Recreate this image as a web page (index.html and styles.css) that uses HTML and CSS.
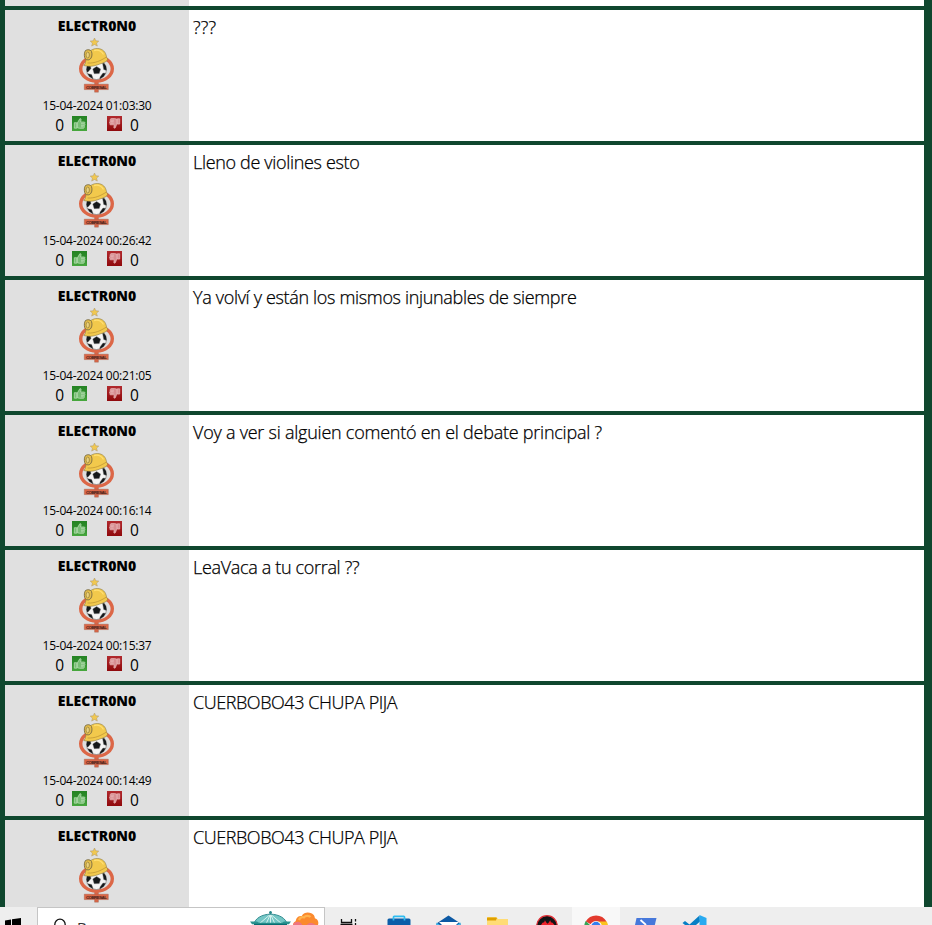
FILE: index.html
```html
<!DOCTYPE html>
<html lang="es">
<head>
<meta charset="utf-8">
<title>Comentarios</title>
<link rel="stylesheet" href="styles.css">
</head>
<body>
<svg class="defs" aria-hidden="true">
  <defs>
    <linearGradient id="g-green" x1="0" y1="0" x2="0" y2="1"><stop offset="0" stop-color="#258323"/><stop offset=".5" stop-color="#2f8f2d"/><stop offset="1" stop-color="#48a83e"/></linearGradient>
    <linearGradient id="g-red" x1="0" y1="0" x2="0" y2="1"><stop offset="0" stop-color="#b12a2e"/><stop offset="1" stop-color="#8f090c"/></linearGradient>
    <clipPath id="ball-clip"><circle cx="26.5" cy="35.500" r="10"/></clipPath>
    <symbol id="crest" viewBox="0 0 52 64">
      <path d="M24.5 4l1.3 2.8 3 .3-2.2 2 .7 3-2.8-1.6-2.8 1.6.7-3-2.2-2 3-.3z" fill="#f1c850" stroke="#a8956a" stroke-width=".5"/>
      <path d="M24.6 46h3.8v12.2h-3.8z" fill="#dc6747" stroke="#96604f" stroke-width=".4"/>
      <ellipse cx="26.5" cy="34.8" rx="15.8" ry="12.3" fill="#dedede" stroke="#dc6747" stroke-width="3.4"/>
      <circle cx="26.5" cy="35.500" r="10" fill="#f4f4f4" stroke="#555" stroke-width=".5"/>
      <g clip-path="url(#ball-clip)" fill="#15181a" stroke="#777" stroke-width=".4">
        <path d="M22.800 35l3.800-2.500 4 2.600-1.400 4.500-5 .1z"/>
        <path d="M15 32l5-2 1 4.500-3 3.500H15zM32.500 29l5.500 1v7l-4.300-1.500zM17 39.500l4.600 1 1.500 4-2 3zM30 43l3-4 4 .4-4 7-3.300-1z"/>
      </g>
      <path d="M13.800 31.500c2.500-2 1.500-5.500 3.200-9.500 1.300-4.600 5.500-7.700 10.700-7.500 5 .200 8.300 3.700 8.800 8.500.4 1.500 1.700 1.500.800 3.300-2.500 2.800-6.500 3.200-10.300 4.700-4 1.500-8.500 1.800-13.200.500z" fill="#f2c94c" stroke="#8c7a40" stroke-width=".6"/>
      <path d="M17.500 29c7.500.500 13.500-2.500 18.700-5.800" fill="none" stroke="#b98f30" stroke-width=".7"/>
      <path d="M24 16.500c4-1 7.500.500 9.500 4" fill="none" stroke="#ffdf70" stroke-width="1.300"/>
      <path d="M15.500 16.500c2-1.300 5-1 6 1 1 3 .5 6.500-1.800 8-2 1-4.500.2-5-2-.6-2.500-.5-5 .8-7z" fill="#e5bd49" stroke="#796c43" stroke-width=".9"/>
      <ellipse cx="17.700" cy="21" rx="1.700" ry="2.900" fill="#ecd27d" stroke="#8e7b3a" stroke-width=".7"/>
      <path d="M14.300 50.200h24v5.400h-24z" fill="#dc6747" stroke="#9a5944" stroke-width=".4"/>
      <text x="26.400" y="54.600" text-anchor="middle" class="crest-name" textLength="21">COBRESAL</text>
    </symbol>
    <symbol id="up" viewBox="0 0 15 15">
      <path d="M0 0h15v15H0z" fill="url(#g-green)"/>
      <path d="M2.300 6.700h2.500v5.500H2.300zM5.300 7l2.500-4.200c.9-.5 1.500.2 1.200 1.300L8.600 6h3.600c1 .2 1 1.300.4 1.600.6.5.5 1.400-.1 1.700.4.5.2 1.300-.3 1.500.3.8-.2 1.500-1 1.500H7.500l-2.200-.5z" fill="#77bd74" stroke="#c9e8c5" stroke-width=".65"/>
      <path d="M9 7.700h3M9 9.300h3M9 10.800h2.500" stroke="#dcf0d8" stroke-width=".5"/>
    </symbol>
    <symbol id="down" viewBox="0 0 15 15">
      <path d="M0 0h15v15H0z" fill="url(#g-red)"/>
      <path d="M10.300 2.800h2.400v5.300h-2.400zM9.800 8l-1.500 3.800c-.7.8-1.700.3-1.400-.8l.4-2.200H3.600c-1-.1-1.200-1.200-.5-1.600-.7-.4-.7-1.300 0-1.600-.5-.5-.3-1.300.3-1.500-.3-.8.1-1.500.9-1.500h3.300l2.200.5z" fill="#d78d91" stroke="#f0c6c7" stroke-width=".65"/>
      <path d="M3.700 7.200h3M3.700 5.700h3M4 4.200h3" stroke="#f2d2d2" stroke-width=".5"/>
    </symbol>
  </defs>
</svg>

<main class="feed">
  <article class="post post-cut"><aside class="author"></aside><p class="message"></p></article>
  <article class="post">
    <aside class="author"><strong class="name">ELECTR0N0</strong><svg class="crest"><use href="#crest"/></svg><time class="date">15-04-2024 01:03:30</time>
      <div class="votes"><span>0</span><svg class="thumb"><use href="#up"/></svg><svg class="thumb thumb-down"><use href="#down"/></svg><span>0</span></div></aside>
    <p class="message marks">???</p>
  </article>
  <article class="post">
    <aside class="author"><strong class="name">ELECTR0N0</strong><svg class="crest"><use href="#crest"/></svg><time class="date">15-04-2024 00:26:42</time>
      <div class="votes"><span>0</span><svg class="thumb"><use href="#up"/></svg><svg class="thumb thumb-down"><use href="#down"/></svg><span>0</span></div></aside>
    <p class="message">Lleno de violines esto</p>
  </article>
  <article class="post">
    <aside class="author"><strong class="name">ELECTR0N0</strong><svg class="crest"><use href="#crest"/></svg><time class="date">15-04-2024 00:21:05</time>
      <div class="votes"><span>0</span><svg class="thumb"><use href="#up"/></svg><svg class="thumb thumb-down"><use href="#down"/></svg><span>0</span></div></aside>
    <p class="message">Ya volví y están los mismos injunables de siempre</p>
  </article>
  <article class="post">
    <aside class="author"><strong class="name">ELECTR0N0</strong><svg class="crest"><use href="#crest"/></svg><time class="date">15-04-2024 00:16:14</time>
      <div class="votes"><span>0</span><svg class="thumb"><use href="#up"/></svg><svg class="thumb thumb-down"><use href="#down"/></svg><span>0</span></div></aside>
    <p class="message loose">Voy a ver si alguien comentó en el debate principal ?</p>
  </article>
  <article class="post">
    <aside class="author"><strong class="name">ELECTR0N0</strong><svg class="crest"><use href="#crest"/></svg><time class="date">15-04-2024 00:15:37</time>
      <div class="votes"><span>0</span><svg class="thumb"><use href="#up"/></svg><svg class="thumb thumb-down"><use href="#down"/></svg><span>0</span></div></aside>
    <p class="message">LeaVaca a tu corral ??</p>
  </article>
  <article class="post">
    <aside class="author"><strong class="name">ELECTR0N0</strong><svg class="crest"><use href="#crest"/></svg><time class="date">15-04-2024 00:14:49</time>
      <div class="votes"><span>0</span><svg class="thumb"><use href="#up"/></svg><svg class="thumb thumb-down"><use href="#down"/></svg><span>0</span></div></aside>
    <p class="message caps">CUERBOBO43 CHUPA PIJA</p>
  </article>
  <article class="post">
    <aside class="author"><strong class="name">ELECTR0N0</strong><svg class="crest"><use href="#crest"/></svg></aside>
    <p class="message caps">CUERBOBO43 CHUPA PIJA</p>
  </article>
</main>

<footer class="taskbar">
  <div class="start"><svg class="icon" viewBox="0 0 37 18"><path d="M5 13.400l6-.9V18H5zM12 12.300l9-1.300v7h-9z" fill="#000"/></svg></div>
  <div class="search">
    <svg class="glass" viewBox="0 0 14 17"><circle cx="7" cy="16.400" r="5.200" fill="none" stroke="#111" stroke-width="1.300"/></svg>
    <span class="search-label">Buscar</span>
    <svg class="art" viewBox="0 0 72 17">
      <path d="M4 16c1-5.500 8-9.800 16.500-9.800S36 10.500 37 16z" fill="#73c6c5"/>
      <path d="M20.500 6.200L9 16M20.500 6.200L16 16M20.500 6.200V16M20.500 6.200L25 16M20.500 6.200L32 16" stroke="#d6f1ee" stroke-width="1" fill="none"/>
      <path d="M4 16c1-5.500 8-9.800 16.500-9.800S36 10.500 37 16M20.500 3.500v3" stroke="#348d91" stroke-width="1" fill="none"/>
      <circle cx="20.500" cy="4.500" r="1.500" fill="#28888b"/>
      <path d="M0 13.600h7l2 1.200h23l2-1.200h7l-2 2.700H2z" fill="#2b9390"/>
      <path d="M4 15.700h33V17H4z" fill="#086e72"/>
      <path d="M43 17c.3-3 2.500-3.500 2.700-4 .8-4.500 4-5.300 6-5 2.500-4.300 7-3.800 9.500-2.700 3.300 1.200 3.500 4 3.700 5 3 1 4.200 4 3.100 6.700z" fill="#fb8a2e"/>
      <path d="M49 12c1-2.500 3-3.200 5-2.600 1.500-2 5-2 6.500-.4" stroke="#ffb34e" stroke-width="2.200" fill="none"/>
      <path d="M43 17c.4-2 2-3 3.500-3 3-.7 4.500 1 6 3zM57 17c1-2 4-2.500 6-1.500l3 1.500z" fill="#ee7580"/>
    </svg>
  </div>
  <div class="apps">
    <svg class="app" viewBox="0 0 49 18"><path d="M16.500 12v3.500h10V12M15.500 17.400h12M30.500 12v2.500M30.500 16v2" stroke="#111" stroke-width="1.300" fill="none"/></svg>
    <svg class="app app-pinned" viewBox="0 0 49 18"><path d="M15.500 13q0-1.500 1.500-1.500h20q1.500 0 1.500 1.500v5h-23z" fill="#0b5da8"/><path d="M21.500 13.500V10q0-.700.700-.700h9.600q.700 0 .700.700v3.500" stroke="#2ebcf1" stroke-width="1.700" fill="none"/></svg>
    <svg class="app" viewBox="0 0 49 18"><path d="M15.500 16.500l12-8 12 8V18h-24z" fill="#0c59a4"/><path d="M18 15h20l-3 3H21z" fill="#fff"/><path d="M15.500 15.500L19 18h-3.500zM39.500 15.500L36 18h3.500z" fill="#39b9ee"/></svg>
    <svg class="app" viewBox="0 0 49 18"><path d="M17 10h9.500l1.500 2h10v6H17z" fill="#ffdc76"/><path d="M17 11.200q0-.700.700-.700h8.300q.700 0 .700.700L26 13.500h-9z" fill="#dfa000"/></svg>
    <svg class="app" viewBox="0 0 49 18"><circle cx="28" cy="19" r="10.300" fill="#121416" stroke="#e02f36" stroke-width="1.300"/><path d="M22 18l1.500-2.300 1.700-.4.700-2 1.400 2.300 1.200 1.200 1.300-1.200 1.400-2.300.7 2 1.700.4L35.500 18z" fill="#ee222b"/></svg>
    <svg class="app app-active" viewBox="0 0 48 18"><path d="M24 20L13.700 14.500A12 12 0 0 1 34.500 14.500L29 18z" fill="#e33b2e"/><path d="M13.700 14A12 12 0 0 0 12.300 18H18z" fill="#35a455"/><path d="M25 14.500h9.700A12 12 0 0 1 36 18h-7z" fill="#fbc31d"/><circle cx="24" cy="20" r="6" fill="#fff"/><circle cx="24" cy="19.500" r="4.700" fill="#347ff0"/></svg>
    <svg class="app app-shell" viewBox="0 0 48 18"><path d="M17 11h20l-1.700 7H15.500z" fill="#4678db"/><path d="M21 13l5.500 5" stroke="#fff" stroke-width="1.800" fill="none"/></svg>
    <svg class="app" viewBox="0 0 48 18"><path d="M14 16l2.500-2 4.500 3.500L31 8.500l.5 6-4 3.500H16.500z" fill="#087fc5"/><path d="M31 8l7 3v7h-7z" fill="#29aaf0"/></svg>
  </div>
</footer>
</body>
</html>
```

FILE: styles.css
```css
* { box-sizing: border-box; }

body {
  margin: 0;
  height: 925px;
  overflow: hidden;
  display: flex;
  flex-direction: column;
  background: #0f472e;
  color: #000;
  font-family: "Open Sans", "Noto Sans", sans-serif;
}

.defs { position: absolute; width: 0; height: 0; }

.feed {
  flex: none;
  height: 907px;
  overflow: hidden;
  display: flex;
  flex-direction: column;
  gap: 4px;
  padding: 0 8px 0 5px;
}

.post {
  flex: none;
  display: flex;
  height: 131px;
  background: #fff;
}

.post-cut { height: 6px; overflow: hidden; }

.author {
  width: 184px;
  display: flex;
  flex-direction: column;
  align-items: center;
  background: #e0e0e0;
}

.name {
  margin-top: 7px;
  height: 17px;
  line-height: 18px;
  font-size: 14px;
  font-weight: 800;
}

.crest { width: 52px; height: 64px; margin-right: 2px; flex: none; }

.crest-name {
  font: bold 4.4px "Liberation Sans", sans-serif;
  fill: #40211a;
}

.date {
  height: 16px;
  line-height: 16px;
  font-size: 12px;
  letter-spacing: -0.22px;
}

.votes {
  display: flex;
  height: 22px;
  line-height: 22px;
  font-size: 15.5px;
}

.thumb { width: 15px; height: 15px; margin: 2px 0 0 8px; }
.thumb-down { margin: 2px 8px 0 20px; }

.message {
  flex: 1;
  margin: 0;
  padding: 5px 4px;
  font-size: 18px;
  font-weight: 300;
  line-height: 25px;
  letter-spacing: -0.33px;
  -webkit-text-stroke: 0.25px #000;
}

.loose { letter-spacing: -0.24px; }
.marks { letter-spacing: 0.2px; }
.caps { letter-spacing: -0.44px; }

.taskbar {
  display: flex;
  flex: none;
  height: 18px;
  overflow: hidden;
  background: #eee;
}

.start, .icon { width: 37px; height: 18px; }

.search {
  display: flex;
  width: 288px;
  height: 40px;
  padding-left: 15px;
  border: 1px solid #c5c5c5;
  background: #fff;
}

.glass { flex: none; width: 14px; height: 17px; }

.search-label {
  flex: none;
  margin-left: 10px;
  margin-top: 8px;
  width: 173px;
  font-size: 15px;
  line-height: 22px;
  color: #333;
}

.art { flex: none; width: 72px; height: 17px; }

.apps { display: flex; }
.app { flex: none; width: 49px; height: 18px; }
.app-pinned { margin-left: -2px; }
.app-active { width: 48px; margin-left: 4px; background: #f8f8f8; }
.app-shell { margin-left: -1px; }
```
